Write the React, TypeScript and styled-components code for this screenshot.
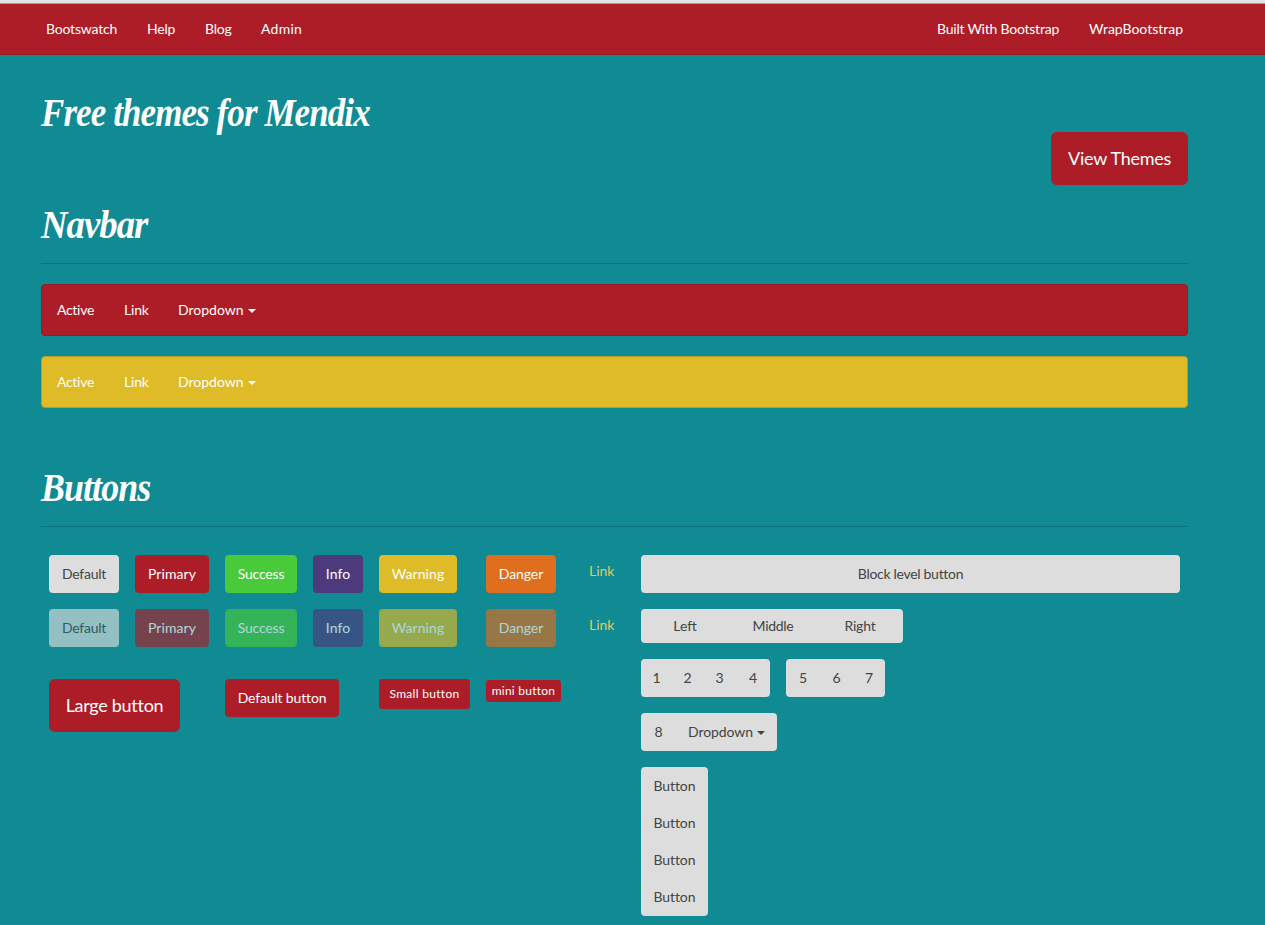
import React from 'react';
import styled, { createGlobalStyle } from 'styled-components';

const tones = {
  default: ['#dddddd', '#444444'],
  primary: ['#ad1d28', '#ffffff'],
  success: ['#48ca3b', '#ffffff'],
  info: ['#4d3a7d', '#ffffff'],
  warning: ['#debb27', '#ffffff'],
  danger: ['#df6e1e', '#ffffff'],
} as const;
type Tone = keyof typeof tones;

const Global = createGlobalStyle`
  * { box-sizing: border-box; }
  body {
    margin: 0;
    background: #108a93;
    color: #fff;
    font: 14px/20px Lato, "Open Sans", sans-serif;
  }
`;

const Page = styled.div`
  height: 925px;
  overflow: hidden;
`;

const TopBar = styled.nav`
  height: 55px;
  padding: 1px 67px 0 31px;
  border-top: 3px solid #e3e3e3;
  border-bottom: 1px solid #911a22;
  background: #ad1d28;
  box-shadow: inset 0 1px #a19a9b;
  display: flex;
  justify-content: space-between;
`;

const Links = styled.div`
  display: flex;
`;

const NavLink = styled.a<{ $w: number; $ls?: number }>`
  width: ${p => p.$w}px;
  padding-left: 15px;
  padding-top: 15px;
  white-space: nowrap;
  letter-spacing: ${p => p.$ls ?? 0}px;
`;

const Container = styled.main`
  width: 1147px;
  margin-left: 41px;
`;

const Hero = styled.header`
  height: 149px;
  padding-top: 37px;
  display: flex;
  justify-content: space-between;
`;

const Title = styled.h1<{ $condense: number }>`
  margin: 0;
  font: italic bold 39px/42px "Liberation Serif", serif;
  letter-spacing: -1px;
  white-space: nowrap;
  transform: scaleX(${p => p.$condense});
  transform-origin: left;
`;

const HeroAction = styled.div`
  padding-top: 40px;
`;

const SectionHead = styled.div<{ $before?: number; $after: number }>`
  height: 60px;
  margin-top: ${p => p.$before ?? 0}px;
  margin-bottom: ${p => p.$after}px;
  border-bottom: 1px solid #0d727a;
`;

const Navbar = styled.nav<{ $tone: Tone; $edge: string }>`
  height: 52px;
  margin-bottom: 20px;
  border: 1px solid ${p => p.$edge};
  border-radius: 4px;
  background: ${p => tones[p.$tone][0]};
  display: flex;
`;

const Caret = styled.span`
  display: inline-block;
  margin-left: 4px;
  border: 4px solid transparent;
  border-top-color: currentColor;
  border-bottom: 0;
  vertical-align: middle;
`;

const Columns = styled.div`
  display: flex;
  align-items: flex-start;
  gap: 8px;
`;

const ButtonGrid = styled.div`
  width: 592px;
  padding-left: 8px;
  display: grid;
  grid-template-columns: 86px 90px 88px 66px 107px 91px 1fr;
  grid-template-rows: 54px 70px 53px;
  align-items: start;
`;

const sizes = {
  large: { h: 53, font: 18, r: 6 },
  normal: { h: 38, font: 14, r: 4 },
  small: { h: 30, font: 12, r: 3 },
  mini: { h: 22, font: 12, r: 3 },
};

const Button = styled.button<{ $w: number; $tone?: Tone; $size?: keyof typeof sizes; $ls?: number; $span?: number }>`
  width: ${p => p.$w}px;
  height: ${p => sizes[p.$size ?? 'normal'].h}px;
  ${p => p.$span && `grid-column: span ${p.$span};`}
  ${p => p.$size === 'mini' && 'margin-top: 1px;'}
  padding: 0 0 ${p => (p.$size === 'mini' ? 1 : 2)}px;
  border: 0;
  border-radius: ${p => sizes[p.$size ?? 'normal'].r}px;
  background: ${p => tones[p.$tone ?? 'default'][0]};
  color: ${p => tones[p.$tone ?? 'default'][1]};
  font-family: inherit;
  font-size: ${p => sizes[p.$size ?? 'normal'].font}px;
  letter-spacing: ${p => p.$ls ?? 0}px;
  white-space: nowrap;
  &:disabled { opacity: 0.65; }
`;

const LinkButton = styled.a`
  padding: 6px 0 0 12px;
  color: #dfcb68;
`;

const Groups = styled.div`
  display: flex;
  flex-direction: column;
  align-items: flex-start;
  gap: 16px;
`;

const Toolbar = styled.div`
  display: flex;
  gap: 16px;
`;

const Group = styled.div<{ $h?: number; $vertical?: boolean }>`
  height: ${p => p.$h ?? 38}px;
  display: flex;
  flex-direction: ${p => (p.$vertical ? 'column' : 'row')};
  border-radius: 4px;
  background: #ddd;
  overflow: hidden;
`;

const Segment = styled.button<{ $w: number; $h?: number; $ls?: number }>`
  width: ${p => p.$w}px;
  height: ${p => (p.$h ? `${p.$h}px` : 'auto')};
  padding: 0;
  border: 0;
  background: transparent;
  color: #444;
  font: inherit;
  letter-spacing: ${p => p.$ls ?? 0}px;
  white-space: nowrap;
`;

const kinds: { tone: Tone; label: string; w: number; ls: number }[] = [
  { tone: 'default', label: 'Default', w: 70, ls: -0.25 },
  { tone: 'primary', label: 'Primary', w: 74, ls: 0.1 },
  { tone: 'success', label: 'Success', w: 72, ls: -0.2 },
  { tone: 'info', label: 'Info', w: 50, ls: 0.1 },
  { tone: 'warning', label: 'Warning', w: 78, ls: 0.1 },
  { tone: 'danger', label: 'Danger', w: 70, ls: -0.1 },
];

const NavItems = () => (
  <>
    <NavLink $w={67} $ls={-0.3}>Active</NavLink>
    <NavLink $w={54} $ls={-0.2}>Link</NavLink>
    <NavLink $w={110}>Dropdown<Caret /></NavLink>
  </>
);

const KindRow = ({ disabled }: { disabled?: boolean }) => (
  <>
    {kinds.map(k => (
      <Button key={k.label} $w={k.w} $tone={k.tone} $ls={k.ls} disabled={disabled}>
        {k.label}
      </Button>
    ))}
    <LinkButton>Link</LinkButton>
  </>
);

export default function App() {
  return (
    <Page>
      <Global />
      <TopBar>
        <Links>
          <NavLink $w={101} $ls={-0.2}>Bootswatch</NavLink>
          <NavLink $w={58} $ls={-0.2}>Help</NavLink>
          <NavLink $w={56} $ls={-0.2}>Blog</NavLink>
          <NavLink $w={72} $ls={0.25}>Admin</NavLink>
        </Links>
        <Links>
          <NavLink $w={152} $ls={-0.23}>Built With Bootstrap</NavLink>
          <NavLink $w={124}>WrapBootstrap</NavLink>
        </Links>
      </TopBar>
      <Container>
        <Hero>
          <Title $condense={0.896}>Free themes for Mendix</Title>
          <HeroAction>
            <Button $w={137} $tone="primary" $size="large" $ls={-0.28}>View Themes</Button>
          </HeroAction>
        </Hero>
        <SectionHead $after={20}><Title as="h2" $condense={0.94}>Navbar</Title></SectionHead>
        <Navbar $tone="primary" $edge="#8d1c25"><NavItems /></Navbar>
        <Navbar $tone="warning" $edge="#b89c25"><NavItems /></Navbar>
        <SectionHead $before={59} $after={28}><Title as="h2" $condense={0.92}>Buttons</Title></SectionHead>
        <Columns>
          <ButtonGrid>
            <KindRow />
            <KindRow disabled />
            <Button $w={131} $tone="primary" $size="large" $ls={-0.28} $span={2}>Large button</Button>
            <Button $w={114} $tone="primary" $ls={-0.15} $span={2}>Default button</Button>
            <Button $w={91} $tone="primary" $size="small" $ls={0.3}>Small button</Button>
            <Button $w={75} $tone="primary" $size="mini" $ls={0.25}>mini button</Button>
          </ButtonGrid>
          <Groups>
            <Button $w={539} $ls={-0.3}>Block level button</Button>
            <Group $h={34}>
              <Segment $w={88}>Left</Segment>
              <Segment $w={88} $ls={-0.3}>Middle</Segment>
              <Segment $w={86} $ls={-0.2}>Right</Segment>
            </Group>
            <Toolbar>
              <Group>
                <Segment $w={31}>1</Segment>
                <Segment $w={31}>2</Segment>
                <Segment $w={33}>3</Segment>
                <Segment $w={34}>4</Segment>
              </Group>
              <Group>
                <Segment $w={34}>5</Segment>
                <Segment $w={33}>6</Segment>
                <Segment $w={32}>7</Segment>
              </Group>
            </Toolbar>
            <Group>
              <Segment $w={35}>8</Segment>
              <Segment $w={101} $ls={-0.1}>Dropdown<Caret /></Segment>
            </Group>
            <Group $vertical $h={149}>
              {[0, 1, 2, 3].map(i => <Segment key={i} $w={67} $h={37} $ls={-0.1}>Button</Segment>)}
            </Group>
          </Groups>
        </Columns>
      </Container>
    </Page>
  );
}
